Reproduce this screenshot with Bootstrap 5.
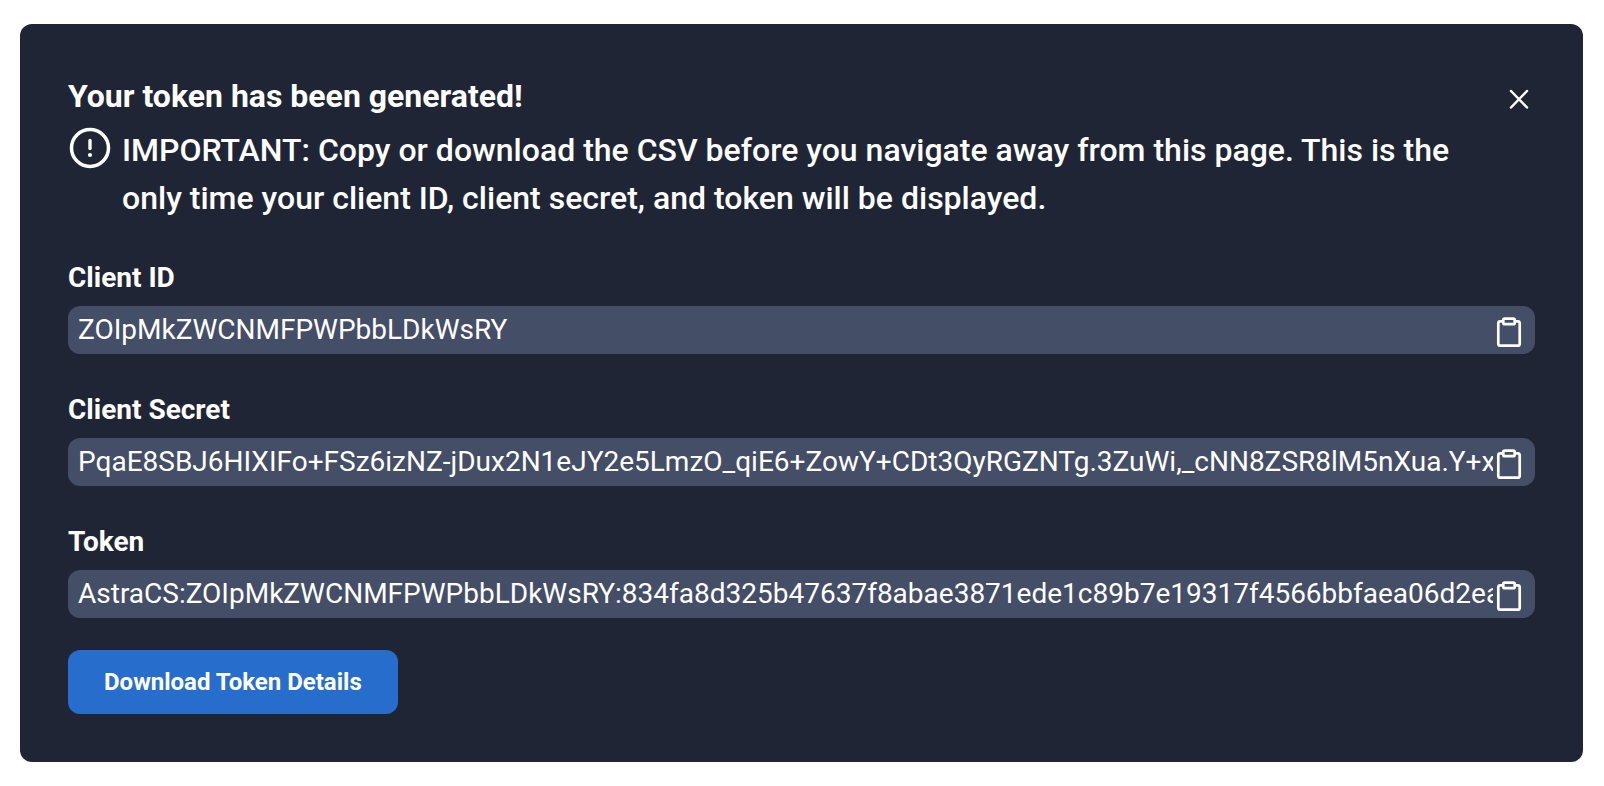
<!DOCTYPE html>
<html lang="en">
<head>
<meta charset="utf-8">
<meta name="viewport" content="width=device-width, initial-scale=1">
<title>Token generated</title>
<link href="https://cdn.jsdelivr.net/npm/bootstrap@5.3.0/dist/css/bootstrap.min.css" rel="stylesheet">
<style>
body { background: #fff; font-family: Roboto, "Liberation Sans", sans-serif; color: #fff; }
.token-page { padding: 24px 21px 24px 20px; }
.token-panel { background: #202535; border-radius: 12px; padding: 48px; }
.token-title { font-size: 32px; line-height: 48px; font-weight: 700; }
.token-close { width: 32px; height: 48px; color: #fff; }
.token-notice { gap: 10px; margin-top: 6px; padding-right: 48px; font-size: 32px; line-height: 48px; font-weight: 500; }
.token-notice svg { width: 44px; height: 44px; }
.token-fields { gap: 36px; margin-top: 36px; }
.token-label { font-size: 28px; line-height: 40px; font-weight: 700; margin-bottom: 8px; }
.token-box { background: #444e66; border-radius: 12px; height: 48px; padding-right: 10px; }
.token-box input { background: transparent; color: #fff; border: 0; outline: 0; font-size: 28px; line-height: 48px; height: 48px; padding: 0; margin-left: 10px; min-width: 0; }
.token-copy { width: 32px; height: 36px; color: #fff; }
.token-download { background: #276dcc; color: #fff; border: 0; border-radius: 12px; font-size: 24px; line-height: 32px; font-weight: 700; padding: 16px 36px; margin-top: 32px; }
.token-download:hover { background: #1f5fb5; color: #fff; }
</style>
</head>
<body>
<svg class="d-none" aria-hidden="true">
  <symbol id="clipboard" viewBox="0 0 32 36" fill="none" stroke="currentColor" stroke-width="2.700" stroke-linejoin="round">
    <path d="M10 9.300H7.300a2 2 0 0 0-2 2v20.400a2 2 0 0 0 2 2h17.400a2 2 0 0 0 2-2V11.300a2 2 0 0 0-2-2H22"/>
    <rect x="10.300" y="6.600" width="11.400" height="5.600" rx="1.500"/>
  </symbol>
</svg>
<main class="token-page">
  <section class="token-panel">
    <header class="d-flex justify-content-between align-items-start">
      <h1 class="token-title mb-0">Your token has been generated!</h1>
      <button type="button" class="token-close btn border-0 p-0 d-flex align-items-center justify-content-center" aria-label="Close">
        <svg width="32" height="32" viewBox="0 0 32 32" fill="none" stroke="currentColor" stroke-width="2.500" stroke-linecap="round"><path d="M8 11l16 16.500M24 11l-16 16.500"/></svg>
      </button>
    </header>
    <div class="token-notice d-flex align-items-start">
      <svg class="flex-shrink-0" viewBox="0 0 44 44" fill="none" stroke="#fff" aria-hidden="true"><circle cx="22" cy="22" r="18.500" stroke-width="3.500"/><path d="M22 14.500v8" stroke-width="3.400" stroke-linecap="round"/><circle cx="22" cy="29" r="2.100" fill="#fff" stroke="none"/></svg>
      <p class="mb-0">IMPORTANT: Copy or download the CSV before you navigate away from this page. This is the only time your client ID, client secret, and token will be displayed.</p>
    </div>
    <div class="token-fields d-flex flex-column">
      <div>
        <label class="token-label d-block" for="client-id">Client ID</label>
        <div class="token-box d-flex align-items-center">
          <input class="flex-grow-1" id="client-id" type="text" readonly value="ZOIpMkZWCNMFPWPbbLDkWsRY">
          <button type="button" class="token-copy btn border-0 p-0 d-flex flex-shrink-0" aria-label="Copy client ID"><svg width="32" height="36"><use href="#clipboard"/></svg></button>
        </div>
      </div>
      <div>
        <label class="token-label d-block" for="client-secret">Client Secret</label>
        <div class="token-box d-flex align-items-center">
          <input class="flex-grow-1" id="client-secret" type="text" readonly value="PqaE8SBJ6HIXIFo+FSz6izNZ-jDux2N1eJY2e5LmzO_qiE6+ZowY+CDt3QyRGZNTg.3ZuWi,_cNN8ZSR8lM5nXua.Y+x">
          <button type="button" class="token-copy btn border-0 p-0 d-flex flex-shrink-0" aria-label="Copy client secret"><svg width="32" height="36"><use href="#clipboard"/></svg></button>
        </div>
      </div>
      <div>
        <label class="token-label d-block" for="token">Token</label>
        <div class="token-box d-flex align-items-center">
          <input class="flex-grow-1" id="token" type="text" readonly value="AstraCS:ZOIpMkZWCNMFPWPbbLDkWsRY:834fa8d325b47637f8abae3871ede1c89b7e19317f4566bbfaea06d2ea">
          <button type="button" class="token-copy btn border-0 p-0 d-flex flex-shrink-0" aria-label="Copy token"><svg width="32" height="36"><use href="#clipboard"/></svg></button>
        </div>
      </div>
    </div>
    <button type="button" class="token-download btn">Download Token Details</button>
  </section>
</main>
<script src="https://cdn.jsdelivr.net/npm/bootstrap@5.3.0/dist/js/bootstrap.bundle.min.js"></script>
</body>
</html>
